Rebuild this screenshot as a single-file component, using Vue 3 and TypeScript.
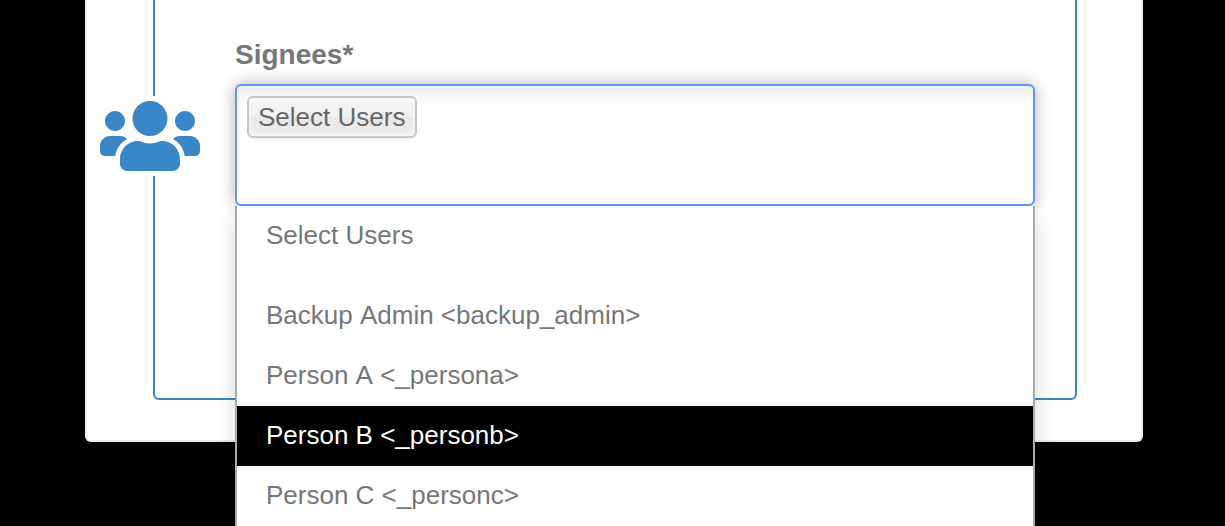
<script setup lang="ts">
import { ref } from 'vue'

interface Option {
  label: string
  placeholder?: boolean
}

const options: Option[] = [
  { label: 'Select Users', placeholder: true },
  { label: 'Backup Admin <backup_admin>' },
  { label: 'Person A <_persona>' },
  { label: 'Person B <_personb>' },
  { label: 'Person C <_personc>' },
]

const chips = ref<string[]>(['Select Users'])
const active = ref(3)
const query = ref('')
</script>

<template>
  <main class="page">
    <section class="card">
      <div class="panel">
        <span class="badge">
          <svg viewBox="0 0 640 512" aria-hidden="true">
            <path
              fill="currentColor"
              d="M96 224c35.3 0 64-28.7 64-64s-28.7-64-64-64-64 28.7-64 64 28.7 64 64 64zm448 0c35.3 0 64-28.7 64-64s-28.7-64-64-64-64 28.7-64 64 28.7 64 64 64zm32 32h-64c-17.6 0-33.5 7.1-45.1 18.6 40.3 22.1 68.9 62 75.1 109.4h66c17.7 0 32-14.3 32-32v-32c0-35.3-28.7-64-64-64zm-256 0c61.9 0 112-50.1 112-112S381.9 32 320 32 208 82.1 208 144s50.1 112 112 112zm76.8 32h-8.3c-20.8 10-43.9 16-68.5 16s-47.6-6-68.5-16h-8.3C179.6 288 128 339.6 128 403.2V432c0 26.5 21.5 48 48 48h288c26.5 0 48-21.5 48-48v-28.8c0-63.6-51.6-115.2-115.2-115.2zm-223.7-13.4C161.5 263.1 145.6 256 128 256H64c-35.3 0-64 28.7-64 64v32c0 17.7 14.3 32 32 32h65.9c6.3-47.4 34.9-87.3 75.2-109.4z"
            />
          </svg>
        </span>
        <label class="label" for="signees">Signees*</label>
        <div class="select">
          <div class="control">
            <button v-for="chip in chips" :key="chip" type="button" class="chip">{{ chip }}</button>
            <input
              id="signees"
              v-model="query"
              class="search"
              type="text"
              role="combobox"
              aria-expanded="true"
              aria-controls="signees-list"
              autocomplete="off"
            />
          </div>
          <ul id="signees-list" class="menu" role="listbox">
            <li
              v-for="(option, i) in options"
              :key="option.label"
              class="option"
              :class="{ active: i === active, placeholder: option.placeholder }"
              role="option"
              :aria-selected="i === active"
              @mouseenter="active = i"
            >{{ option.label }}</li>
          </ul>
        </div>
      </div>
    </section>
  </main>
</template>

<style>
body {
  margin: 0;
  background: #000;
}
</style>

<style scoped>
.page {
  box-sizing: border-box;
  height: 100vh;
  overflow: hidden;
  padding: 0 82px 0 85px;
  background: #000;
  color: #777;
  font-family: "Liberation Sans", Arial, sans-serif;
  font-size: 26px;
  font-kerning: none;
}

.card {
  padding: 0 64px 40px 66px;
  border: 2px solid #ededed;
  border-top: 0;
  border-radius: 0 0 6px 6px;
  background: #fff;
}

.panel {
  position: relative;
  padding: 36px 40px 192px 80px;
  border: 2px solid #3a87c7;
  border-top: 0;
  border-radius: 0 0 6px 6px;
}

.badge {
  position: absolute;
  top: 96px;
  left: -55px;
  width: 100px;
  height: 80px;
  background: #fff;
  color: #3a87c7;
}

.badge svg {
  display: block;
  width: 100%;
  height: 100%;
}

.label {
  display: block;
  margin-bottom: 10px;
  font-size: 28px;
  font-weight: 700;
  line-height: 38px;
}

.select {
  position: relative;
}

.control {
  display: flex;
  flex-wrap: wrap;
  align-items: flex-start;
  box-sizing: border-box;
  min-height: 122px;
  padding: 10px;
  border: 2px solid #6696ef;
  border-radius: 6px;
  background: linear-gradient(#eee, #fff 20px);
  box-shadow: 0 0 16px rgba(0, 0, 0, 0.3);
}

.chip {
  box-sizing: border-box;
  height: 42px;
  padding: 0 10px 0 9px;
  border: 2px solid #c6c6c6;
  border-radius: 6px;
  background: linear-gradient(#f4f4f4 20%, #f0f0f0 50%, #e8e8e8 52%, #eee 100%);
  box-shadow: 0 2px 0 rgba(0, 0, 0, 0.05), inset 0 0 4px #fff;
  color: #666;
  font: inherit;
  font-kerning: none;
  line-height: 36px;
}

.search {
  flex: 1;
  min-width: 40px;
  height: 42px;
  padding: 0 10px;
  border: 0;
  outline: 0;
  background: transparent;
  color: inherit;
  font: inherit;
}

.menu {
  position: absolute;
  top: 100%;
  left: 0;
  right: 0;
  margin: 0;
  padding: 0 0 20px;
  border: 2px solid #aaa;
  border-top: 0;
  background: #fff;
  box-shadow: 0 8px 20px rgba(0, 0, 0, 0.15);
  list-style: none;
}

.option {
  padding: 0 29px 2px;
  line-height: 58px;
}

.placeholder {
  margin-bottom: 20px;
}

.active {
  background: #000;
  color: #fff;
}
</style>
